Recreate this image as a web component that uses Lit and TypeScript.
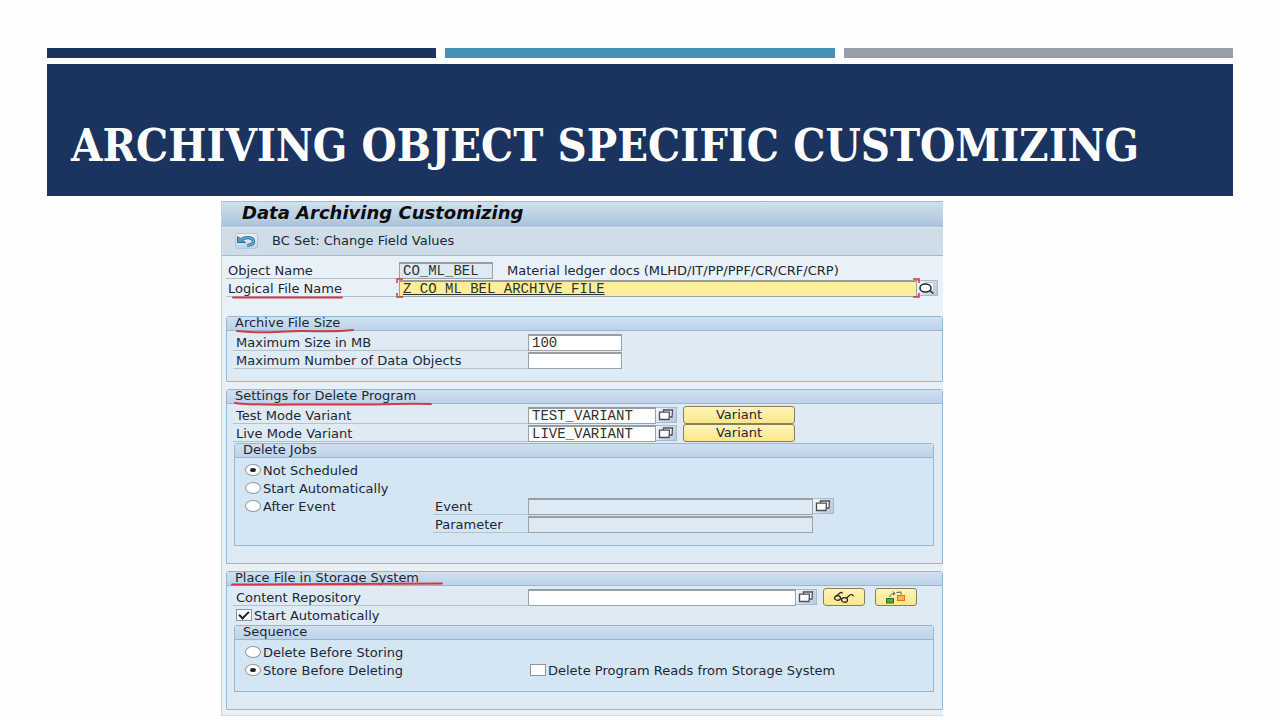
import { LitElement, html, css, svg } from "lit";
import { customElement, property } from "lit/decorators.js";

const stackIcon = html`<svg width="18" height="14" viewBox="0 0 18 14" fill="#fff" stroke="#4a4e54" stroke-width="1.300">
  <path d="M6.500 4V2H15.500L15 9H12.500" />
  <path d="M2.500 4.200H12.500L12 11.500H2.500z" />
</svg>`;

@customElement("group-box")
export class GroupBox extends LitElement {
  @property() heading = "";
  @property() mark = "";
  @property({ type: Boolean, reflect: true }) inner = false;

  static styles = css`
    :host {
      display: block;
      border: 1px solid #9bb5cb;
      border-radius: 3px 3px 0 0;
      background: #deeaf4;
    }
    :host([inner]) {
      margin: 1px 0 5px 1px;
      background: #d4e5f3;
    }
    .head {
      position: relative;
      height: 13px;
      border-bottom: 1px solid #9bb5cb;
      background: linear-gradient(#cfe0f1, #bcd3ea);
      padding-left: 8px;
      font-size: 13px;
      font-weight: 400;
      line-height: 12px;
      margin: 0;
      white-space: nowrap;
    }
    .mark {
      position: absolute;
      left: 4px;
      top: 8px;
      overflow: visible;
    }
    .body {
      padding: 2px 8px 12px 6px;
    }
    :host([inner]) .body {
      padding: 3px 10px 12px;
    }
  `;

  render() {
    return html`<h3 class="head">
        ${this.heading}
        ${this.mark
          ? html`<svg class="mark" width="220" height="10" fill="none" stroke="#d23a48" stroke-width="2" stroke-linecap="round">
              ${svg`<path d=${this.mark} />`}
            </svg>`
          : ""}
      </h3>
      <div class="body"><slot></slot></div>`;
  }
}

@customElement("app-root")
export class AppRoot extends LitElement {
  static styles = css`
    :host {
      display: block;
      min-height: 100vh;
      box-sizing: border-box;
      padding: 48px 47px 0;
      background: #fefefe;
      overflow: hidden;
    }
    * {
      box-sizing: border-box;
    }
    .strips {
      display: grid;
      grid-template-columns: repeat(3, 1fr);
      gap: 9px;
      margin-bottom: 6px;
    }
    .strip {
      height: 10px;
      background: #1b335f;
    }
    .strip.blue {
      background: #468fb7;
    }
    .strip.gray {
      background: #999da7;
    }
    .banner {
      background: #1b335f;
      color: #fff;
      padding: 48px 24px 16px;
    }
    .banner h1 {
      margin: 0;
      font: bold 45px/68px "DejaVu Serif Condensed", "DejaVu Serif", serif;
      white-space: nowrap;
    }
    .sap {
      max-width: 722px;
      margin: 5px 0 0 174px;
      border: 1px solid #b4c8d8;
      border-right: 0;
      border-color: #a3bacb #a3bacb #cfdeea #c3d3e0;
      background: #e8f0f8;
      color: #1c2733;
      font: 13px/17px "DejaVu Sans", Verdana, sans-serif;
    }
    .title {
      margin: 0;
      height: 26px;
      padding-left: 20px;
      border-bottom: 1px solid #dce8f1;
      background: linear-gradient(#d0e0ec, #aac3d9);
      color: #0a0c10;
      font-size: 18px;
      font-style: italic;
      font-weight: 700;
      line-height: 22px;
    }
    .tools {
      display: flex;
      align-items: center;
      gap: 14px;
      height: 28px;
      padding: 0 0 2px 13px;
      border-bottom: 1px solid #a3bccf;
      background: #cfdde8;
    }
    .content {
      display: flex;
      flex-direction: column;
      gap: 7px;
      padding: 5px 0 5px 4px;
    }
    .top {
      margin-bottom: 12px;
    }
    .row {
      display: flex;
      align-items: center;
      height: 18px;
      white-space: nowrap;
    }
    .label {
      position: relative;
      flex: 0 0 295px;
      height: 17px;
      padding-left: 3px;
      border-bottom: 1px solid #b3c2cd;
    }
    .top .label {
      flex-basis: 173px;
      padding-left: 2px;
    }
    .label.sub {
      flex-basis: 95px;
      padding-left: 2px;
    }
    .choice {
      display: flex;
      align-items: center;
      gap: 2px;
    }
    .choice.lead {
      flex: 0 0 188px;
    }
    .choice.wide {
      flex: 0 0 285px;
    }
    .checks {
      padding-left: 3px;
    }
    input {
      margin: 0;
      padding: 0 0 0 3px;
      border: 1px solid #9aa3ac;
      border-top: 2px solid #979da4;
      border-radius: 0;
      height: 17px;
      width: 94px;
      background: #fff;
      color: #303030;
      font: 14px/14px "Liberation Mono", monospace;
      outline: 0;
    }
    input.flat {
      background: #deeaf3;
    }
    input.mid {
      width: 128px;
    }
    input.event {
      width: 285px;
    }
    input.repo {
      width: 268px;
    }
    input.active {
      width: 100%;
      background: #fdee9b;
      text-decoration: underline;
    }
    input[type="radio"],
    input[type="checkbox"] {
      appearance: none;
      flex: none;
      display: grid;
      place-items: center;
      width: 16px;
      height: 12px;
      padding: 0;
      border: 1px solid #8d969e;
    }
    input[type="radio"] {
      border-radius: 50%;
    }
    input[type="radio"]:checked::before {
      content: "";
      width: 6px;
      height: 4px;
      border-radius: 50%;
      background: #20242a;
    }
    input[type="checkbox"]:checked::before {
      content: "";
      width: 8px;
      height: 4px;
      border: solid #20242a;
      border-width: 0 0 2px 2px;
      transform: translateY(-1px) rotate(-45deg);
    }
    button {
      display: grid;
      place-items: center;
      flex: none;
      margin: 0;
      padding: 0;
      color: inherit;
      font: inherit;
    }
    .help {
      width: 21px;
      height: 16px;
      border: 1px solid #a9b9cc;
      border-left: 0;
      background: linear-gradient(120deg, #f4f8fc, #b6c6dc);
    }
    .back {
      width: 23px;
      height: 16px;
      border: 1px solid #b4c7d6;
      border-radius: 3px;
      background: linear-gradient(#edf4f9, #bfd2e2);
    }
    .yellow {
      height: 18px;
      width: 42px;
      border: 1px solid #84805f;
      border-radius: 3px;
      background: linear-gradient(#fff4b8, #fbe78c);
      margin-left: 6px;
    }
    .yellow.text {
      width: 112px;
      line-height: 16px;
    }
    .yellow + .yellow {
      margin-left: 10px;
    }
    .focus {
      position: relative;
      flex: 0 0 518px;
    }
    .focus input {
      display: block;
    }
    .bracket {
      position: absolute;
      top: -2px;
      left: -3px;
    }
    .bracket.right {
      left: auto;
      right: -3px;
    }
    .mark {
      position: absolute;
      left: 4px;
      top: 14px;
      overflow: visible;
    }
    .note {
      padding-left: 14px;
    }
  `;

  private stack(name: string) {
    return html`<button class="help" aria-label=${name}>${stackIcon}</button>`;
  }

  render() {
    return html`
      <div class="strips">
        <div class="strip"></div>
        <div class="strip blue"></div>
        <div class="strip gray"></div>
      </div>
      <header class="banner"><h1>ARCHIVING OBJECT SPECIFIC CUSTOMIZING</h1></header>

      <main class="sap">
        <h2 class="title">Data Archiving Customizing</h2>
        <div class="tools">
          <button class="back" aria-label="Undo">
            <svg width="21" height="14" viewBox="0 0 21 14" fill="none">
              <path d="M5 6C8 2.500 17.500 2.500 17.500 7.500C17.500 10 15 11 11 11.500" stroke="#2b6e98" stroke-width="3.200" />
              <path d="M1.500 2.500V8.500H9.500z" fill="#4f9cc6" stroke="#2b6e98" />
              <path d="M5 6C8 2.500 17.500 2.500 17.500 7.500C17.500 10 15 11 11 11.500" stroke="#6db2d6" stroke-width="1.400" />
            </svg>
          </button>
          <span>BC Set: Change Field Values</span>
        </div>

        <div class="content">
          <div class="top">
            <div class="row">
              <label class="label" for="object">Object Name</label>
              <input id="object" class="flat" readonly value="CO_ML_BEL" />
              <span class="note">Material ledger docs (MLHD/IT/PP/PPF/CR/CRF/CRP)</span>
            </div>
            <div class="row">
              <label class="label" for="logical">Logical File Name
                <svg class="mark" width="112" height="6" fill="none" stroke="#d23a48" stroke-width="2" stroke-linecap="round"><path d="M3 3.500H112" /></svg>
              </label>
              <div class="focus">
                <input id="logical" class="active" value="Z_CO_ML_BEL_ARCHIVE_FILE" />
                <svg class="bracket" width="7" height="20" fill="none" stroke="#d8323c" stroke-width="1.500"><path d="M7 1H1V5M1 15V19H7" /></svg>
                <svg class="bracket right" width="7" height="20" fill="none" stroke="#d8323c" stroke-width="1.500"><path d="M0 1H6V5M6 15V19H0" /></svg>
              </div>
              <button class="help" aria-label="Search">
                <svg width="18" height="14" viewBox="0 0 18 14" fill="#fff" stroke="#23282e" stroke-width="1.500">
                  <path d="M7 1.500H15.500V10" stroke="#c3cad4" stroke-width="1" />
                  <ellipse cx="7.500" cy="7" rx="5.500" ry="4" /><path d="M11.500 9.500L15.500 12.500" />
                </svg>
              </button>
            </div>
          </div>

          <group-box heading="Archive File Size" mark="M6 6C30 9 50 6 70 6S105 7 122 5">
            <div class="row">
              <label class="label" for="size">Maximum Size in MB</label>
              <input id="size" value="100" />
            </div>
            <div class="row">
              <label class="label" for="count">Maximum Number of Data Objects</label>
              <input id="count" />
            </div>
          </group-box>

          <group-box heading="Settings for Delete Program" mark="M4 5C20 8 60 6 110 6.500S170 5 200 6">
            <div class="row">
              <label class="label" for="test">Test Mode Variant</label>
              <input id="test" class="mid" value="TEST_VARIANT" />${this.stack("Select test variant")}
              <button class="yellow text">Variant</button>
            </div>
            <div class="row">
              <label class="label" for="live">Live Mode Variant</label>
              <input id="live" class="mid" value="LIVE_VARIANT" />${this.stack("Select live variant")}
              <button class="yellow text">Variant</button>
            </div>
            <group-box inner heading="Delete Jobs">
              <div class="row">
                <label class="choice lead"><input type="radio" name="job" checked />Not Scheduled</label>
              </div>
              <div class="row">
                <label class="choice lead"><input type="radio" name="job" />Start Automatically</label>
              </div>
              <div class="row">
                <label class="choice lead"><input type="radio" name="job" />After Event</label>
                <label class="label sub" for="event">Event</label>
                <input id="event" class="flat event" readonly />${this.stack("Select event")}
              </div>
              <div class="row">
                <span class="choice lead"></span>
                <label class="label sub" for="param">Parameter</label>
                <input id="param" class="flat event" readonly />
              </div>
            </group-box>
          </group-box>

          <group-box heading="Place File in Storage System" mark="M1 4.500C60 4 150 4 211 3.500">
            <div class="row">
              <label class="label" for="repo">Content Repository</label>
              <input id="repo" class="repo" />${this.stack("Select repository")}
              <button class="yellow" aria-label="Display">
                <svg width="22" height="14" viewBox="0 0 22 14" fill="none" stroke="#26261c" stroke-width="1.200">
                  <ellipse cx="4.500" cy="8" rx="3" ry="2.300" /><ellipse cx="11.500" cy="10" rx="3" ry="2.300" />
                  <path d="M2 7L7.500 2.500C8.500 2 9.500 2.500 9 3.700M7.400 8.500L9 9M13.500 8L17 5C18.500 4 20.500 4.500 20 6.500" />
                </svg>
              </button>
              <button class="yellow" aria-label="Sequence">
                <svg width="22" height="14" viewBox="0 0 22 14">
                  <path d="M4.500 7C5 4.500 7 3.500 9.500 3.500M8 1.500L10 3.500 8 5M11.500 2.500L16 2V4.500" fill="none" stroke="#5a5848" />
                  <rect x="1.500" y="8.500" width="7" height="4.500" fill="#57a639" stroke="#2f6f20" />
                  <rect x="12.500" y="5.500" width="7" height="5" fill="#f9b250" stroke="#d87a12" />
                </svg>
              </button>
            </div>
            <div class="row checks">
              <label class="choice"><input type="checkbox" checked />Start Automatically</label>
            </div>
            <group-box inner heading="Sequence">
              <div class="row">
                <label class="choice"><input type="radio" name="seq" />Delete Before Storing</label>
              </div>
              <div class="row">
                <label class="choice wide"><input type="radio" name="seq" checked />Store Before Deleting</label>
                <label class="choice"><input type="checkbox" />Delete Program Reads from Storage System</label>
              </div>
            </group-box>
          </group-box>
        </div>
      </main>
    `;
  }
}
